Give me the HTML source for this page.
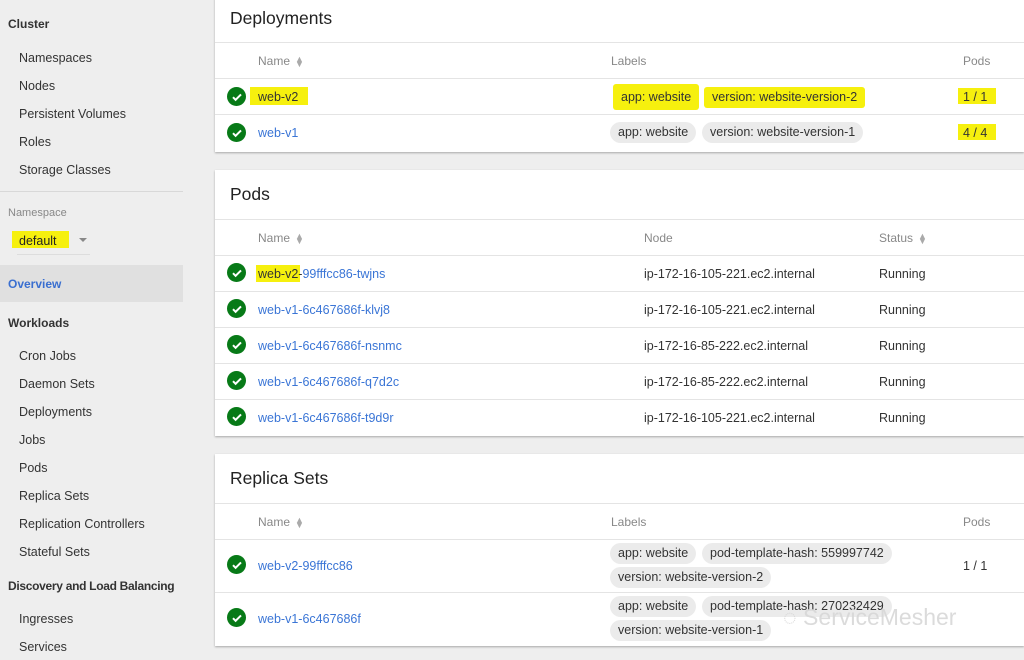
<!DOCTYPE html>
<html><head><meta charset="utf-8"><style>
*{margin:0;padding:0;box-sizing:border-box}
body{width:1024px;height:660px;overflow:hidden;background:#eeeeee;font-family:"Liberation Sans",sans-serif;font-size:12.5px;color:#333;position:relative}
.a{position:absolute;white-space:nowrap}
.side{color:#333}
.sh{font-weight:bold;color:#333;font-size:12px}
.card{position:absolute;left:215px;width:809px;background:#fff;box-shadow:0 1px 2px rgba(0,0,0,.3)}
.ttl{position:absolute;left:15px;font-size:17.5px;color:#222}
.ln{position:absolute;left:0;right:0;height:1px;background:#e4e4e4}
.hd{color:#888;font-size:12px}
.lk{color:#3a75d6}
.ok{position:absolute;left:12px;width:19px;height:19px;border-radius:50%;background:#077a17}
.ok svg{position:absolute;left:3.5px;top:3.5px}
.chip{position:absolute;background:#ebebeb;border-radius:11px;padding:0 8px;height:21px;line-height:21px;color:#333;white-space:nowrap}
.y{background:#f6f00e}
.chip.y{border-radius:3px}
.srt{display:inline-block;margin-left:5px;color:#aaa;font-size:9px;line-height:5px;vertical-align:middle}
</style></head><body>
<div class="a sh" style="left:8px;top:17px">Cluster</div>
<div class="a side" style="left:19px;top:51px">Namespaces</div>
<div class="a side" style="left:19px;top:79px">Nodes</div>
<div class="a side" style="left:19px;top:107px">Persistent Volumes</div>
<div class="a side" style="left:19px;top:135px">Roles</div>
<div class="a side" style="left:19px;top:163px">Storage Classes</div>
<div class="a" style="left:0;top:191px;width:183px;height:1px;background:#d8d8d8"></div>
<div class="a" style="left:8px;top:207px;font-size:11px;color:#888">Namespace</div>
<div class="a" style="left:12px;top:231px;width:57px;height:17px;background:#f6f00e"></div>
<div class="a" style="left:19px;top:234px;color:#222">default</div>
<div class="a" style="left:79px;top:238px;width:0;height:0;border-left:4px solid transparent;border-right:4px solid transparent;border-top:4px solid #888"></div>
<div class="a" style="left:17px;top:254px;width:73px;height:1px;background:#ddd"></div>
<div class="a" style="left:0;top:265px;width:183px;height:37px;background:#e0e0e0"></div>
<div class="a" style="left:8px;top:277px;color:#3a6fd0;font-weight:bold;font-size:12px">Overview</div>
<div class="a sh" style="left:8px;top:316px">Workloads</div>
<div class="a side" style="left:19px;top:349px">Cron Jobs</div>
<div class="a side" style="left:19px;top:377px">Daemon Sets</div>
<div class="a side" style="left:19px;top:405px">Deployments</div>
<div class="a side" style="left:19px;top:433px">Jobs</div>
<div class="a side" style="left:19px;top:461px">Pods</div>
<div class="a side" style="left:19px;top:489px">Replica Sets</div>
<div class="a side" style="left:19px;top:517px">Replication Controllers</div>
<div class="a side" style="left:19px;top:545px">Stateful Sets</div>
<div class="a sh" style="left:8px;top:579px;letter-spacing:-0.3px">Discovery and Load Balancing</div>
<div class="a side" style="left:19px;top:612px">Ingresses</div>
<div class="a side" style="left:19px;top:640px">Services</div>

<div class="card" style="top:-2px;height:154px">
 <div class="ttl" style="top:10px">Deployments</div>
 <div class="ln" style="top:44px"></div>
 <div class="a hd" style="left:43px;top:56px">Name<span class="srt">▲<br>▼</span></div>
 <div class="a hd" style="left:396px;top:56px">Labels</div>
 <div class="a hd" style="left:748px;top:56px">Pods</div>
 <div class="ln" style="top:80px"></div>
 <div class="ok" style="top:89px"><svg width="12" height="12" viewBox="0 0 12 12"><path d="M2 6.2l2.6 2.6L10 3.4" stroke="#fff" stroke-width="2" fill="none"/></svg></div>
 <div class="a y" style="left:35px;top:89px;width:58px;height:18px"></div>
 <div class="a" style="left:43px;top:92px;color:#333">web-v2</div>
 <div class="chip y" style="left:398px;top:86px;height:26px;line-height:26px">app: website</div>
 <div class="chip y" style="left:489px;top:89px">version: website-version-2</div>
 <div class="a y" style="left:743px;top:90px;width:38px;height:16px"></div>
 <div class="a" style="left:748px;top:92px;color:#333">1 / 1</div>
 <div class="ln" style="top:116px"></div>
 <div class="ok" style="top:125px"><svg width="12" height="12" viewBox="0 0 12 12"><path d="M2 6.2l2.6 2.6L10 3.4" stroke="#fff" stroke-width="2" fill="none"/></svg></div>
 <div class="a lk" style="left:43px;top:128px">web-v1</div>
 <div class="chip" style="left:395px;top:124px">app: website</div>
 <div class="chip" style="left:487px;top:124px">version: website-version-1</div>
 <div class="a y" style="left:743px;top:126px;width:38px;height:16px"></div>
 <div class="a" style="left:748px;top:128px;color:#333">4 / 4</div>
</div>

<div class="card" style="top:170px;height:266px">
 <div class="ttl" style="top:14px">Pods</div>
 <div class="ln" style="top:49px"></div>
 <div class="a hd" style="left:43px;top:61px">Name<span class="srt">▲<br>▼</span></div>
 <div class="a hd" style="left:429px;top:61px">Node</div>
 <div class="a hd" style="left:664px;top:61px">Status<span class="srt">▲<br>▼</span></div>
 <div class="ln" style="top:85px"></div>
 <div class="ok" style="top:93px"><svg width="12" height="12" viewBox="0 0 12 12"><path d="M2 6.2l2.6 2.6L10 3.4" stroke="#fff" stroke-width="2" fill="none"/></svg></div>
 <div class="a y" style="left:41px;top:95px;width:44px;height:17px"></div>
 <div class="a" style="left:43px;top:97px"><span style="color:#333">web-v2-</span><span class="lk">99fffcc86-twjns</span></div>
 <div class="a" style="left:429px;top:97px">ip-172-16-105-221.ec2.internal</div>
 <div class="a" style="left:664px;top:97px">Running</div>
 <div class="ln" style="top:121px"></div>
 <div class="ok" style="top:129px"><svg width="12" height="12" viewBox="0 0 12 12"><path d="M2 6.2l2.6 2.6L10 3.4" stroke="#fff" stroke-width="2" fill="none"/></svg></div>
 <div class="a lk" style="left:43px;top:133px">web-v1-6c467686f-klvj8</div>
 <div class="a" style="left:429px;top:133px">ip-172-16-105-221.ec2.internal</div>
 <div class="a" style="left:664px;top:133px">Running</div>
 <div class="ln" style="top:157px"></div>
 <div class="ok" style="top:165px"><svg width="12" height="12" viewBox="0 0 12 12"><path d="M2 6.2l2.6 2.6L10 3.4" stroke="#fff" stroke-width="2" fill="none"/></svg></div>
 <div class="a lk" style="left:43px;top:169px">web-v1-6c467686f-nsnmc</div>
 <div class="a" style="left:429px;top:169px">ip-172-16-85-222.ec2.internal</div>
 <div class="a" style="left:664px;top:169px">Running</div>
 <div class="ln" style="top:193px"></div>
 <div class="ok" style="top:201px"><svg width="12" height="12" viewBox="0 0 12 12"><path d="M2 6.2l2.6 2.6L10 3.4" stroke="#fff" stroke-width="2" fill="none"/></svg></div>
 <div class="a lk" style="left:43px;top:205px">web-v1-6c467686f-q7d2c</div>
 <div class="a" style="left:429px;top:205px">ip-172-16-85-222.ec2.internal</div>
 <div class="a" style="left:664px;top:205px">Running</div>
 <div class="ln" style="top:229px"></div>
 <div class="ok" style="top:237px"><svg width="12" height="12" viewBox="0 0 12 12"><path d="M2 6.2l2.6 2.6L10 3.4" stroke="#fff" stroke-width="2" fill="none"/></svg></div>
 <div class="a lk" style="left:43px;top:241px">web-v1-6c467686f-t9d9r</div>
 <div class="a" style="left:429px;top:241px">ip-172-16-105-221.ec2.internal</div>
 <div class="a" style="left:664px;top:241px">Running</div>
</div>

<div class="card" style="top:454px;height:192px">
 <div class="ttl" style="top:14px">Replica Sets</div>
 <div class="ln" style="top:49px"></div>
 <div class="a hd" style="left:43px;top:61px">Name<span class="srt">▲<br>▼</span></div>
 <div class="a hd" style="left:396px;top:61px">Labels</div>
 <div class="a hd" style="left:748px;top:61px">Pods</div>
 <div class="ln" style="top:85px"></div>
 <div class="ok" style="top:101px"><svg width="12" height="12" viewBox="0 0 12 12"><path d="M2 6.2l2.6 2.6L10 3.4" stroke="#fff" stroke-width="2" fill="none"/></svg></div>
 <div class="a lk" style="left:43px;top:105px">web-v2-99fffcc86</div>
 <div class="chip" style="left:395px;top:89px">app: website</div>
 <div class="chip" style="left:487px;top:89px">pod-template-hash: 559997742</div>
 <div class="chip" style="left:395px;top:113px">version: website-version-2</div>
 <div class="a" style="left:748px;top:105px">1 / 1</div>
 <div class="ln" style="top:138px"></div>
 <div class="ok" style="top:154px"><svg width="12" height="12" viewBox="0 0 12 12"><path d="M2 6.2l2.6 2.6L10 3.4" stroke="#fff" stroke-width="2" fill="none"/></svg></div>
 <div class="a lk" style="left:43px;top:158px">web-v1-6c467686f</div>
 <div class="chip" style="left:395px;top:142px">app: website</div>
 <div class="chip" style="left:487px;top:142px">pod-template-hash: 270232429</div>
 <div class="chip" style="left:395px;top:166px">version: website-version-1</div>
 <div class="a" style="left:568px;top:150px;font-size:23px;color:rgba(215,215,215,.9)">◌ ServiceMesher</div>
</div>
</body></html>
